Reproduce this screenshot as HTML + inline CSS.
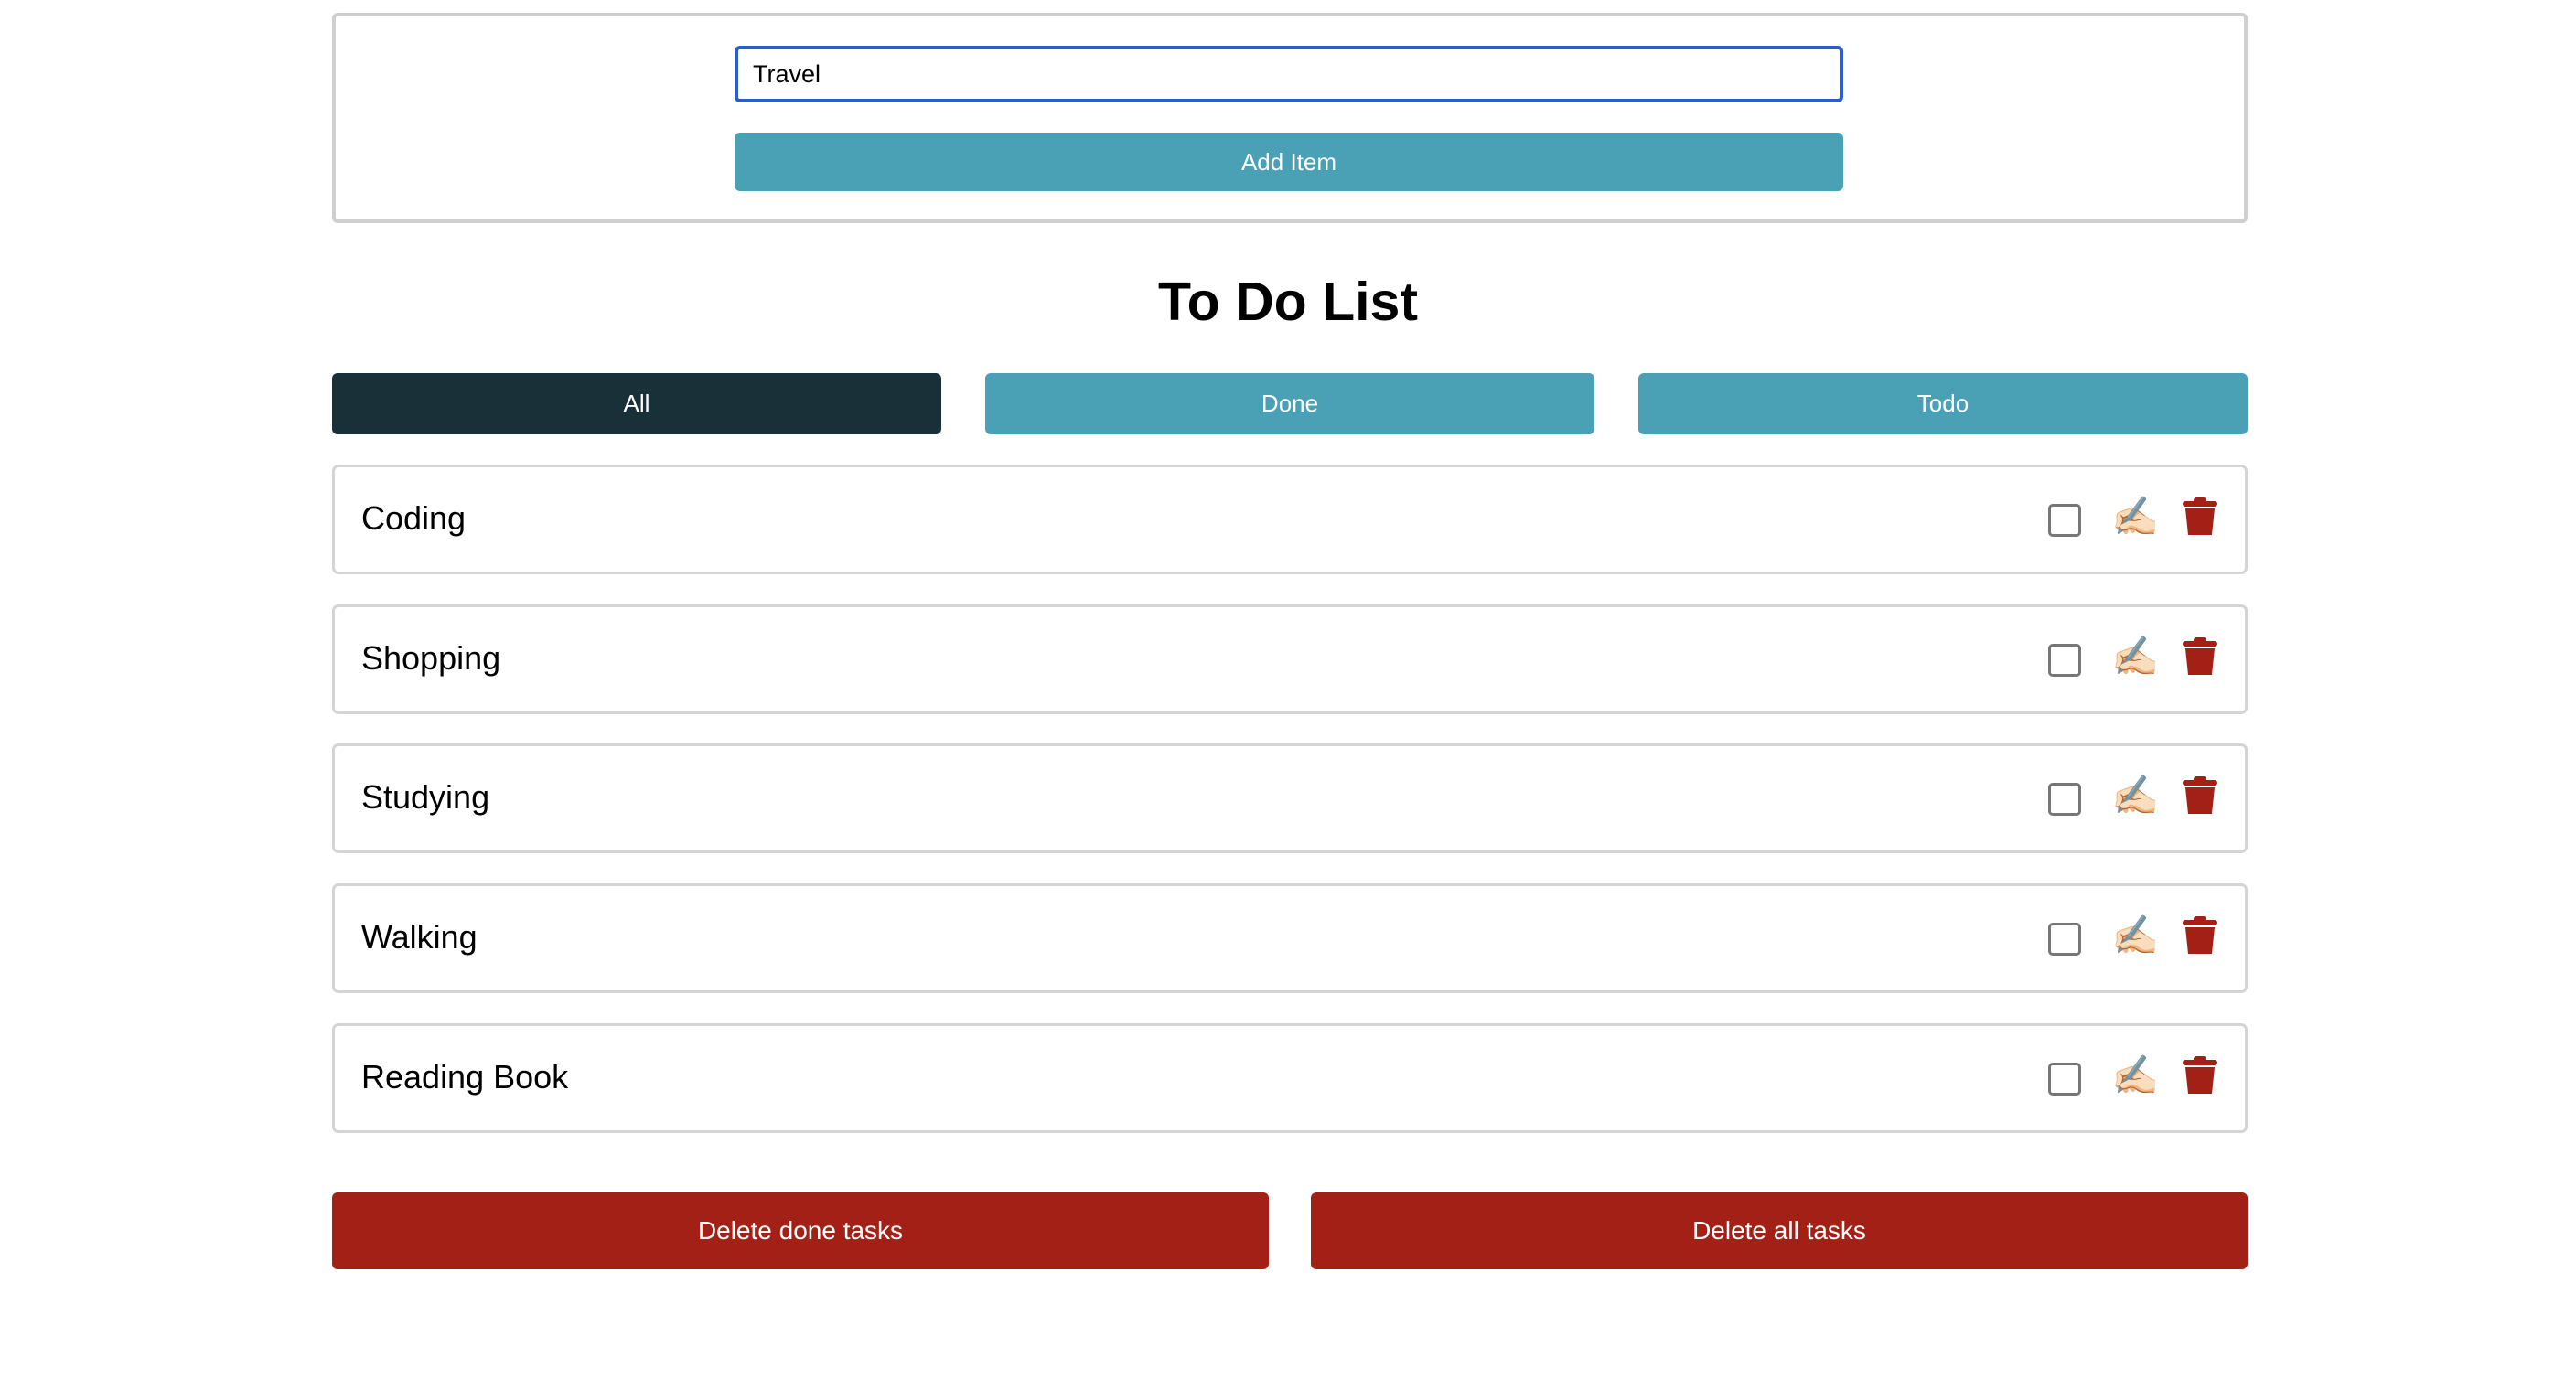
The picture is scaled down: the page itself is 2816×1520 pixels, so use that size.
<!DOCTYPE html>
<html><head><meta charset="utf-8"><style>
*{box-sizing:border-box;margin:0;padding:0}
body{width:2816px;height:1520px;background:#fff;font-family:"Liberation Sans",Arial,sans-serif;position:relative;overflow:hidden}
.abs{position:absolute}
.top{left:363px;top:14px;width:2094px;height:230px;border:4px solid #cfcfcf;border-radius:6px}
.inp{left:803px;top:50px;width:1212px;height:62px;border:4px solid #2a5fc9;border-radius:6px;font-size:27px;padding-left:16px;line-height:54px;color:#000}
.btn{display:flex;align-items:center;justify-content:center;color:#fff;border-radius:6px}
.teal{background:#4aa0b5}
.title{left:0;width:2816px;top:296px;text-align:center;font-weight:bold;font-size:59px;color:#000}
.item{left:363px;width:2094px;height:120px;border:3px solid #d4d4d4;border-radius:7px}
.item span{position:absolute;left:29px;top:0;line-height:112px;font-size:36px;color:#000}
.cb{position:absolute;left:1873px;top:40px;width:36px;height:36px;border:3px solid #777;border-radius:5px}
.pen{position:absolute;left:1942px;top:30px;font-size:42px;font-family:"Noto Color Emoji","DejaVu Sans",sans-serif}
.trash{position:absolute;left:2020px;top:33px}
.red{background:#a32016;font-size:28px}
</style></head><body>
<div class="abs top"></div>
<div class="abs inp">Travel</div>
<div class="abs btn teal" style="left:803px;top:145px;width:1212px;height:64px;font-size:26px">Add Item</div>
<div class="abs title">To Do List</div>
<div class="abs btn" style="left:363px;top:408px;width:666px;height:67px;background:#1a3038;font-size:26px">All</div>
<div class="abs btn teal" style="left:1077px;top:408px;width:666px;height:67px;font-size:26px">Done</div>
<div class="abs btn teal" style="left:1791px;top:408px;width:666px;height:67px;font-size:26px">Todo</div>

<div class="abs item" style="top:508px"><span>Coding</span><div class="cb"></div><div class="pen">✍🏻</div><svg class="trash" width="38" height="42" viewBox="0 0 38 42"><rect x="0" y="4" width="38" height="6" rx="3" fill="#a32016"/><rect x="12" y="0" width="14" height="6" rx="3" fill="#a32016"/><path d="M3 12H35L32 41H6Z" fill="#a32016"/></svg></div>
<div class="abs item" style="top:661px"><span>Shopping</span><div class="cb"></div><div class="pen">✍🏻</div><svg class="trash" width="38" height="42" viewBox="0 0 38 42"><rect x="0" y="4" width="38" height="6" rx="3" fill="#a32016"/><rect x="12" y="0" width="14" height="6" rx="3" fill="#a32016"/><path d="M3 12H35L32 41H6Z" fill="#a32016"/></svg></div>
<div class="abs item" style="top:813px"><span>Studying</span><div class="cb"></div><div class="pen">✍🏻</div><svg class="trash" width="38" height="42" viewBox="0 0 38 42"><rect x="0" y="4" width="38" height="6" rx="3" fill="#a32016"/><rect x="12" y="0" width="14" height="6" rx="3" fill="#a32016"/><path d="M3 12H35L32 41H6Z" fill="#a32016"/></svg></div>
<div class="abs item" style="top:966px"><span>Walking</span><div class="cb"></div><div class="pen">✍🏻</div><svg class="trash" width="38" height="42" viewBox="0 0 38 42"><rect x="0" y="4" width="38" height="6" rx="3" fill="#a32016"/><rect x="12" y="0" width="14" height="6" rx="3" fill="#a32016"/><path d="M3 12H35L32 41H6Z" fill="#a32016"/></svg></div>
<div class="abs item" style="top:1119px"><span>Reading Book</span><div class="cb"></div><div class="pen">✍🏻</div><svg class="trash" width="38" height="42" viewBox="0 0 38 42"><rect x="0" y="4" width="38" height="6" rx="3" fill="#a32016"/><rect x="12" y="0" width="14" height="6" rx="3" fill="#a32016"/><path d="M3 12H35L32 41H6Z" fill="#a32016"/></svg></div>

<div class="abs btn red" style="left:363px;top:1304px;width:1024px;height:84px">Delete done tasks</div>
<div class="abs btn red" style="left:1433px;top:1304px;width:1024px;height:84px">Delete all tasks</div>
</body></html>
